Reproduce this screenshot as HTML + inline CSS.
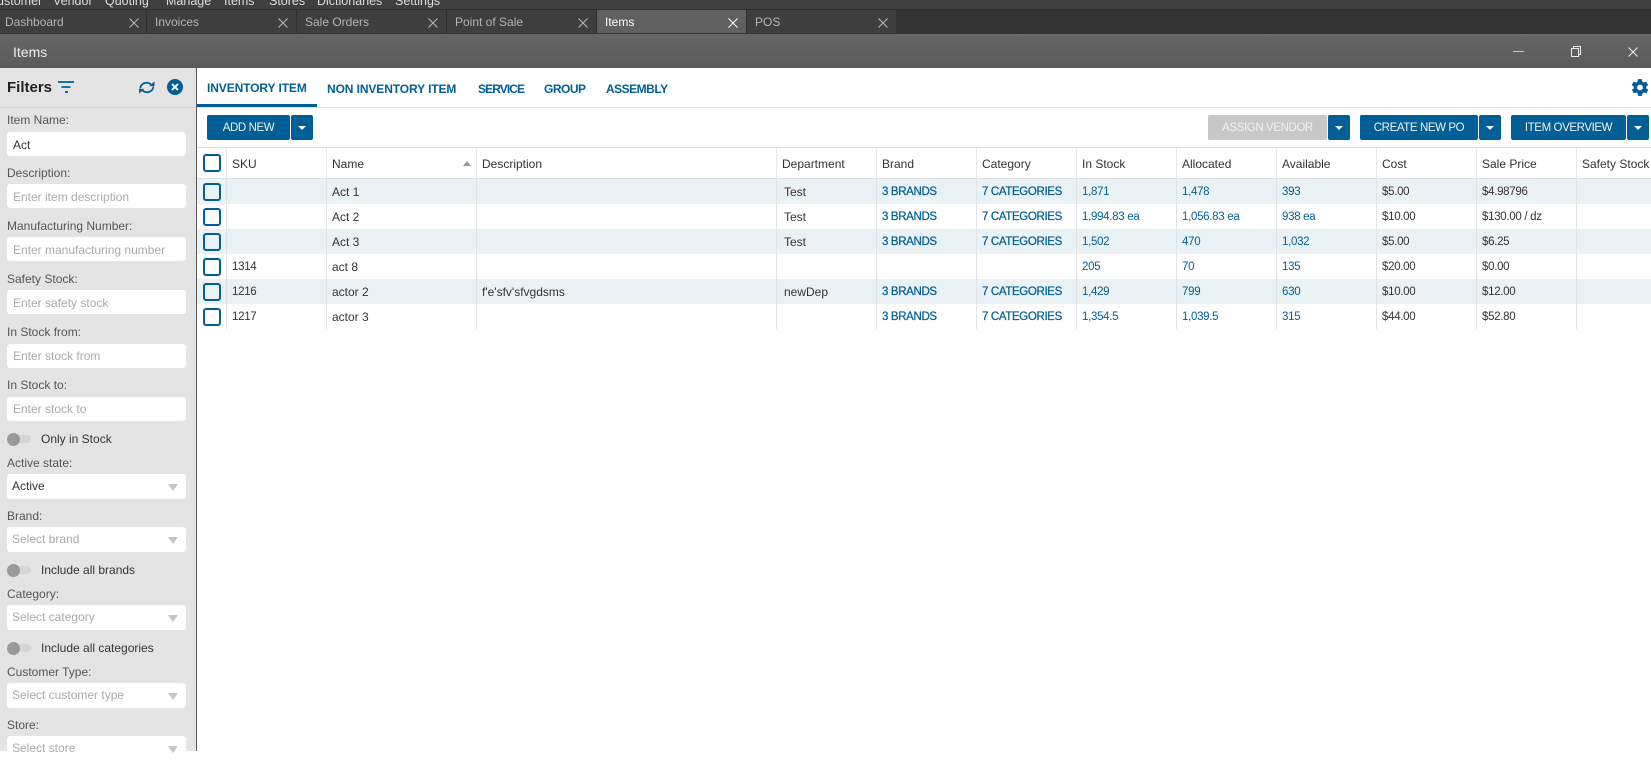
<!DOCTYPE html>
<html><head><meta charset="utf-8"><title>Items</title>
<style>
*{box-sizing:border-box}
html,body{margin:0;padding:0;width:1651px;height:751px;overflow:hidden;background:#fff;font-family:"Liberation Sans",sans-serif;font-size:12px;color:#333}
.a{position:absolute;white-space:nowrap}
.m{top:-7px;font-size:12.5px;color:#ddd;line-height:16px}
.tab{position:absolute;top:10px;width:150px;height:23px;background:#3e3e3e;border-right:1px solid #2f2f2f;color:#b5b5b5;line-height:25px;padding-left:8px;font-size:12px}
.tab svg{position:absolute;left:131px;top:8px}
.tab.on{background:#606060;color:#fff}
.lb{position:absolute;left:7px;font-size:12px;line-height:14px;color:#555;white-space:nowrap}
.in{position:absolute;left:7px;width:179px;height:24px;background:#fff;border-radius:3px;line-height:26px;padding-left:6px;color:#aaa;font-size:12px;white-space:nowrap}
.in.v{color:#333}
.sel{padding-left:5px;height:25px;line-height:25px;overflow:hidden}
.sel:after{content:"";position:absolute;right:8px;top:10px;border-left:5px solid transparent;border-right:5px solid transparent;border-top:7px solid #c6c6c6}
.tg{position:absolute;left:7px;width:24px;height:8px;background:#d6d6d6;border-radius:4px}
.tg:after{content:"";position:absolute;left:0;top:-2.5px;width:13px;height:13px;border-radius:50%;background:#9a9a9a}
.tl{position:absolute;left:41px;font-size:12px;color:#333;line-height:14px;white-space:nowrap}
.nt{position:absolute;top:81px;font-size:12px;letter-spacing:-.1px;font-weight:700;color:#005f96;line-height:16px;white-space:nowrap}
.b{position:absolute;top:115px;height:25px;background:#005f96;border-radius:2px;color:#f2f2f2;text-align:center;line-height:26px;font-size:11.5px;letter-spacing:-.4px;white-space:nowrap}
.c{width:22px}
.c:after{content:"";position:absolute;left:7px;top:11px;border-left:4px solid transparent;border-right:4px solid transparent;border-top:4px solid #fff}
table{position:absolute;left:197px;top:147px;width:1454px;border-collapse:separate;border-spacing:0;table-layout:fixed;font-size:12px}
th{height:32px;border-top:1px solid #ddd;border-bottom:1px solid #dcdee0;border-right:1px solid #e6e8ea;font-weight:400;text-align:left;padding:1px 0 0 5px;color:#333;background:#fff;white-space:nowrap;overflow:visible}
td{height:25px;border-right:1px solid #dfe3e6;padding:0 0 0 5px;color:#333;white-space:nowrap;overflow:visible}
tr.s td{background:#ebf2f6}
td.l{color:#005f96;font-size:11.5px;letter-spacing:-.3px;padding-top:1px}
td.u{color:#005f96;font-size:11.5px;letter-spacing:-.35px;-webkit-text-stroke:.25px #005f96;padding-top:1px}
td.t{padding-left:7px}
td:nth-child(2),td:nth-child(11),td:nth-child(12){font-size:11.5px;letter-spacing:-.3px;padding-top:1px}
th:last-child,td:last-child{border-right:0}
td.cb,th.cb{padding:0;position:relative}
.k{position:absolute;left:6px;top:4px;width:18px;height:18px;border:2px solid #005f96;border-radius:3px}
th .k{top:6px;background:#fff}
</style></head><body>

<div class="a" style="left:0;top:0;width:1651px;height:10px;background:#3f3f3f;border-bottom:1px solid #2f2f2f"></div>
<div class="a m" style="left:-12px">Customer</div>
<div class="a m" style="left:53px">Vendor</div>
<div class="a m" style="left:105px">Quoting</div>
<div class="a m" style="left:166px">Manage</div>
<div class="a m" style="left:224px">Items</div>
<div class="a m" style="left:269px">Stores</div>
<div class="a m" style="left:317px">Dictionaries</div>
<div class="a m" style="left:395px">Settings</div>

<div class="a" style="left:0;top:10px;width:1651px;height:24px;background:#333"></div>
<div class="tab" style="left:-3px;padding-left:8px;width:150px">Dashboard<svg width="10" height="10" style="left:132px"><path d="M.5.5l9 9M9.500.5l-9 9" stroke="#bbb" fill="none"/></svg></div>
<div class="tab" style="left:147px">Invoices<svg width="10" height="10"><path d="M.5.5l9 9M9.500.5l-9 9" stroke="#bbb" fill="none"/></svg></div>
<div class="tab" style="left:297px">Sale Orders<svg width="10" height="10"><path d="M.5.5l9 9M9.500.5l-9 9" stroke="#bbb" fill="none"/></svg></div>
<div class="tab" style="left:447px">Point of Sale<svg width="10" height="10"><path d="M.5.5l9 9M9.500.5l-9 9" stroke="#bbb" fill="none"/></svg></div>
<div class="tab on" style="left:597px">Items<svg width="10" height="10"><path d="M.5.5l9 9M9.500.5l-9 9" stroke="#fff" fill="none"/></svg></div>
<div class="tab" style="left:747px;width:149px;border-right:0">POS<svg width="10" height="10"><path d="M.5.5l9 9M9.500.5l-9 9" stroke="#bbb" fill="none"/></svg></div>

<div class="a" style="left:0;top:34px;width:1651px;height:34px;background:linear-gradient(#666,#5a5a5a)"></div>
<div class="a" style="left:13px;top:44px;font-size:14px;line-height:17px;color:#eee">Items</div>
<svg class="a" style="left:1510px;top:44px" width="135" height="14">
<path d="M3 7.500h11" stroke="#ccc" fill="none"/>
<path d="M61.500 4.500h7v8h-7zM63.500 4.500v-2h7v8h-2" stroke="#eee" fill="none"/>
<path d="M118.500 3.500l9 9M127.500 3.500l-9 9" stroke="#eee" fill="none"/>
</svg>

<!-- sidebar -->
<div class="a" style="left:0;top:68px;width:197px;height:683px;background:#e4e4e4;border-right:1px solid #5a5a5a"></div>
<div class="a" style="left:0;top:107px;width:196px;height:1px;background:#d2d2d2"></div>
<div class="a" style="left:7px;top:79px;font-size:15px;font-weight:700;color:#222;line-height:18px">Filters</div>
<svg class="a" style="left:56px;top:78px" width="20" height="18"><path d="M2 4h16M5.500 9h9M9 14h3" stroke="#005f96" stroke-width="1.800" fill="none"/></svg>
<svg class="a" style="left:138px;top:80px" width="18" height="15" viewBox="0 0 20 17"><path d="M2.500 9.500a7 6 0 0 1 12-4.500M17 7.500a7 6 0 0 1-12 4.500" stroke="#005f96" stroke-width="2" fill="none"/><path d="M12.500 7h6v-5.500zM7 10h-6v5.500z" fill="#005f96"/></svg>
<svg class="a" style="left:167px;top:79px" width="16" height="16"><circle cx="8" cy="8" r="8" fill="#005f96"/><path d="M5 5l6 6M11 5l-6 6" stroke="#fff" stroke-width="1.900" fill="none"/></svg>

<div class="lb" style="top:113px">Item Name:</div><div class="in v" style="top:132px">Act</div>
<div class="lb" style="top:166px">Description:</div><div class="in" style="top:184px">Enter item description</div>
<div class="lb" style="top:219px">Manufacturing Number:</div><div class="in" style="top:237px">Enter manufacturing number</div>
<div class="lb" style="top:272px">Safety Stock:</div><div class="in" style="top:290px">Enter safety stock</div>
<div class="lb" style="top:325px">In Stock from:</div><div class="in" style="top:344px;line-height:25px">Enter stock from</div>
<div class="lb" style="top:378px">In Stock to:</div><div class="in" style="top:397px;line-height:25px">Enter stock to</div>
<div class="tg" style="top:435px"></div><div class="tl" style="top:432px">Only in Stock</div>
<div class="lb" style="top:456px">Active state:</div><div class="in sel v" style="top:474px">Active</div>
<div class="lb" style="top:509px">Brand:</div><div class="in sel" style="top:527px">Select brand</div>
<div class="tg" style="top:566px"></div><div class="tl" style="top:563px">Include all brands</div>
<div class="lb" style="top:587px">Category:</div><div class="in sel" style="top:605px">Select category</div>
<div class="tg" style="top:644px"></div><div class="tl" style="top:641px">Include all categories</div>
<div class="lb" style="top:665px">Customer Type:</div><div class="in sel" style="top:683px">Select customer type</div>
<div class="lb" style="top:718px">Store:</div><div class="in sel" style="top:736px">Select store</div>

<!-- main tabs -->
<div class="a" style="left:197px;top:107px;width:1454px;height:1px;background:#e2e2e2"></div>
<div class="a" style="left:197px;top:104px;width:120px;height:3px;background:#005f96"></div>
<div class="nt" style="left:207px;top:80px">INVENTORY ITEM</div>
<div class="nt" style="left:327px">NON INVENTORY ITEM</div>
<div class="nt" style="left:478px;letter-spacing:-.9px">SERVICE</div>
<div class="nt" style="left:544px;letter-spacing:-.5px">GROUP</div>
<div class="nt" style="left:606px;letter-spacing:-.5px">ASSEMBLY</div>
<svg class="a" style="left:1630px;top:77px" width="20" height="21" viewBox="0 0 24 24"><path fill="#005f96" d="M19.400 13a7.500 7.500 0 0 0 0-2l2.100-1.600a.5.5 0 0 0 .1-.6l-2-3.500a.5.5 0 0 0-.6-.2l-2.500 1a7.300 7.300 0 0 0-1.700-1l-.4-2.700a.5.5 0 0 0-.5-.4h-4a.5.5 0 0 0-.5.400l-.4 2.700a7.300 7.300 0 0 0-1.700 1l-2.500-1a.5.5 0 0 0-.6.200l-2 3.500a.5.5 0 0 0 .1.600L4.600 11a7.500 7.500 0 0 0 0 2l-2.100 1.600a.5.5 0 0 0-.1.600l2 3.500a.5.5 0 0 0 .6.200l2.500-1a7.300 7.300 0 0 0 1.700 1l.4 2.700a.5.5 0 0 0 .5.400h4a.5.5 0 0 0 .5-.4l.4-2.700a7.300 7.300 0 0 0 1.700-1l2.500 1a.5.5 0 0 0 .6-.2l2-3.500a.5.5 0 0 0-.1-.6zM12 15.500a3.500 3.500 0 1 1 0-7 3.500 3.500 0 0 1 0 7z"/></svg>

<!-- buttons -->
<div class="b" style="left:207px;width:83px">ADD NEW</div><div class="b c" style="left:291px"></div>
<div class="b" style="left:1208px;width:119px;background:#c8c8c8;color:#f1f1f1">ASSIGN VENDOR</div><div class="b c" style="left:1328px"></div>
<div class="b" style="left:1360px;width:118px">CREATE NEW PO</div><div class="b c" style="left:1479px"></div>
<div class="b" style="left:1511px;width:115px">ITEM OVERVIEW</div><div class="b c" style="left:1627px"></div>

<!-- table -->
<table>
<colgroup><col style="width:30px"><col style="width:100px"><col style="width:150px"><col style="width:300px"><col style="width:100px"><col style="width:100px"><col style="width:100px"><col style="width:100px"><col style="width:100px"><col style="width:100px"><col style="width:100px"><col style="width:100px"><col style="width:74px"></colgroup>
<tr><th class="cb"><div class="k"></div></th><th>SKU</th><th style="position:relative">Name<div style="position:absolute;left:136px;top:13px;border-left:4px solid transparent;border-right:4px solid transparent;border-bottom:5px solid #999"></div></th><th>Description</th><th>Department</th><th>Brand</th><th>Category</th><th>In Stock</th><th>Allocated</th><th>Available</th><th>Cost</th><th>Sale Price</th><th>Safety Stock</th></tr>
<tr class="s"><td class="cb"><div class="k"></div></td><td></td><td>Act 1</td><td></td><td class="t">Test</td><td class="u">3 BRANDS</td><td class="u">7 CATEGORIES</td><td class="l">1,871</td><td class="l">1,478</td><td class="l">393</td><td>$5.00</td><td>$4.98796</td><td></td></tr>
<tr><td class="cb"><div class="k"></div></td><td></td><td>Act 2</td><td></td><td class="t">Test</td><td class="u">3 BRANDS</td><td class="u">7 CATEGORIES</td><td class="l">1,994.83 ea</td><td class="l">1,056.83 ea</td><td class="l">938 ea</td><td>$10.00</td><td>$130.00 / dz</td><td></td></tr>
<tr class="s"><td class="cb"><div class="k"></div></td><td></td><td>Act 3</td><td></td><td class="t">Test</td><td class="u">3 BRANDS</td><td class="u">7 CATEGORIES</td><td class="l">1,502</td><td class="l">470</td><td class="l">1,032</td><td>$5.00</td><td>$6.25</td><td></td></tr>
<tr><td class="cb"><div class="k"></div></td><td>1314</td><td>act 8</td><td></td><td class="t"></td><td></td><td></td><td class="l">205</td><td class="l">70</td><td class="l">135</td><td>$20.00</td><td>$0.00</td><td></td></tr>
<tr class="s"><td class="cb"><div class="k"></div></td><td>1216</td><td>actor 2</td><td>f'e'sfv'sfvgdsms</td><td class="t">newDep</td><td class="u">3 BRANDS</td><td class="u">7 CATEGORIES</td><td class="l">1,429</td><td class="l">799</td><td class="l">630</td><td>$10.00</td><td>$12.00</td><td></td></tr>
<tr><td class="cb"><div class="k"></div></td><td>1217</td><td>actor 3</td><td></td><td class="t"></td><td class="u">3 BRANDS</td><td class="u">7 CATEGORIES</td><td class="l">1,354.5</td><td class="l">1,039.5</td><td class="l">315</td><td>$44.00</td><td>$52.80</td><td></td></tr>
</table>
</body></html>
